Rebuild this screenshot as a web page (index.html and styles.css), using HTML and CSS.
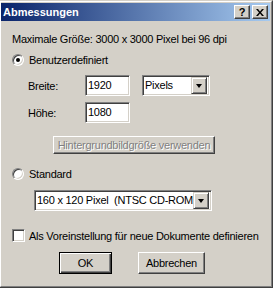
FILE: index.html
```html
<!DOCTYPE html>
<html lang="de">
<head>
    <meta charset="UTF-8">
    <title>Abmessungen</title>
    <link rel="stylesheet" href="styles.css">
</head>
<body>
<div class="window">
    <div class="frame">
        <div class="titlebar">
            <span class="title">Abmessungen</span>
            <span class="tbtn help">?</span>
            <span class="tbtn close">
                <svg width="8" height="7" viewBox="0 0 8 7"><path d="M0 0h2l2 2.5L6 0h2L5 3.5 8 7H6L4 4.5 2 7H0l3-3.5z" fill="#000"/></svg>
            </span>
        </div>

        <div class="content">
            <div class="maxsize">Maximale Größe: 3000 x 3000 Pixel bei 96 dpi</div>

            <div class="option first">
                <span class="radio checked"><span class="dot"></span></span>
                <span>Benutzerdefiniert</span>
            </div>

            <div class="field breite">
                <span class="field-label">Breite:</span>
                <span class="edit">1920</span>
                <span class="combo units">
                    <span class="combo-text">Pixels</span>
                    <span class="arrow"><span class="tri"></span></span>
                </span>
            </div>
            <div class="field hoehe">
                <span class="field-label">Höhe:</span>
                <span class="edit">1080</span>
            </div>

            <div class="bg-row">
                <span class="button disabled bg-button">Hintergrundbildgröße verwenden</span>
            </div>

            <div class="option second">
                <span class="radio"></span>
                <span>Standard</span>
            </div>

            <div class="preset-row">
                <span class="combo preset">
                    <span class="combo-text">160 x 120 Pixel  (NTSC CD-ROM</span>
                    <span class="arrow"><span class="tri"></span></span>
                </span>
            </div>

            <div class="check-row">
                <span class="checkbox"></span>
                <span>Als Voreinstellung für neue Dokumente definieren</span>
            </div>

            <div class="actions">
                <span class="button default ok">OK</span>
                <span class="button cancel">Abbrechen</span>
            </div>
        </div>
    </div>
</div>
</body>
</html>
```

FILE: styles.css
```css
html {
    background-color: #d4d0c8;
}

body {
    margin: 0;
    font-family: "Liberation Sans", Arial, sans-serif;
    font-size: 11px;
    letter-spacing: -0.25px;
    white-space: nowrap;
    color: #000;
}

/* Rahmen des Fensters */
.window {
    width: 273px;
    height: 288px;
    box-sizing: border-box;
    background-color: #d4d0c8;
    border-top: 1px solid #d4d0c8;
    border-right: 1px solid #404040;
    border-bottom: 1px solid #404040;
}

.frame {
    height: 100%;
    box-sizing: border-box;
    border-top: 1px solid #fff;
    border-left: 1px solid #fff;
    border-right: 1px solid #808080;
    border-bottom: 1px solid #808080;
    padding: 1px 1px 1px 0;
}

/* Titelleiste */
.titlebar {
    height: 18px;
    display: flex;
    align-items: center;
    padding-left: 2px;
    background: linear-gradient(to right, #0a246a, #a6caf0);
}

.title {
    color: #fff;
    font-weight: bold;
    font-size: 11px;
    letter-spacing: 0;
    flex: 1;
}

.tbtn {
    width: 16px;
    height: 14px;
    box-sizing: border-box;
    display: flex;
    align-items: center;
    justify-content: center;
    background-color: #d4d0c8;
    border: 1px solid;
    border-color: #fff #404040 #404040 #fff;
    box-shadow: inset -1px -1px #808080;
    font-weight: bold;
    font-size: 11px;
    line-height: 12px;
}

.close {
    margin-left: 2px;
    margin-right: 2px;
}

/* Inhalt */
.content {
    padding-left: 11px;
}

.maxsize {
    margin-top: 12px;
    line-height: 13px;
}

.option {
    display: flex;
    align-items: center;
    height: 12px;
    gap: 5px;
}

.option.first {
    margin-top: 8px;
}

.option.second {
    margin-top: 14px;
}

.radio {
    width: 12px;
    height: 12px;
    box-sizing: border-box;
    border-radius: 50%;
    border: 1px solid;
    border-color: #808080 #fff #fff #808080;
    background-color: #fff;
    box-shadow: inset 1px 1px #404040, inset -1px -1px #d4d0c8;
    display: flex;
    align-items: center;
    justify-content: center;
}

.dot {
    width: 4px;
    height: 4px;
    border-radius: 50%;
    background-color: #000;
}

.field {
    display: flex;
    align-items: center;
    height: 21px;
    padding-left: 16px;
}

.field.breite {
    margin-top: 9px;
}

.field.hoehe {
    margin-top: 6px;
}

.field-label {
    width: 57px;
}

/* Eingabefelder */
.edit,
.combo {
    height: 21px;
    box-sizing: border-box;
    background-color: #fff;
    border: 1px solid;
    border-color: #808080 #fff #fff #808080;
    box-shadow: inset 1px 1px #404040, inset -1px -1px #d4d0c8;
    display: flex;
    align-items: center;
    line-height: 13px;
}

.edit {
    width: 45px;
    padding-left: 2px;
}

.combo {
    padding: 2px;
}

.combo-text {
    flex: 1;
    white-space: pre;
    overflow: hidden;
}

.units {
    width: 68px;
    margin-left: 12px;
}

.arrow {
    width: 16px;
    height: 17px;
    box-sizing: border-box;
    background-color: #d4d0c8;
    border: 1px solid;
    border-color: #d4d0c8 #404040 #404040 #d4d0c8;
    box-shadow: inset 1px 1px #fff, inset -1px -1px #808080;
    display: flex;
    align-items: center;
    justify-content: center;
    flex-shrink: 0;
}

.tri {
    width: 0;
    height: 0;
    border-left: 3.5px solid transparent;
    border-right: 3.5px solid transparent;
    border-top: 4px solid #000;
}

/* Schaltflächen */
.button {
    height: 22px;
    box-sizing: border-box;
    display: flex;
    align-items: center;
    justify-content: center;
    background-color: #d4d0c8;
    border: 1px solid;
    border-color: #fff #404040 #404040 #fff;
    box-shadow: inset -1px -1px #808080;
}

.button.default {
    border-color: #000;
    box-shadow: inset 1px 1px #fff, inset -1px -1px #404040, inset -2px -2px #808080;
}

.button.disabled {
    color: #808080;
    text-shadow: 1px 1px #fff;
}

.bg-row {
    margin-top: 13px;
    padding-left: 41px;
}

.bg-button {
    width: 162px;
    height: 18px;
}

.preset-row {
    margin-top: 10px;
    padding-left: 22px;
}

.preset {
    width: 178px;
}

.check-row {
    margin-top: 18px;
    display: flex;
    align-items: center;
    height: 13px;
    gap: 4px;
}

.checkbox {
    width: 13px;
    height: 13px;
    box-sizing: border-box;
    background-color: #fff;
    border: 1px solid;
    border-color: #808080 #fff #fff #808080;
    box-shadow: inset 1px 1px #404040, inset -1px -1px #d4d0c8;
}

.actions {
    margin-top: 10px;
    display: flex;
    padding-left: 47px;
}

.ok {
    width: 53px;
}

.cancel {
    width: 67px;
    margin-left: 26px;
}
```
